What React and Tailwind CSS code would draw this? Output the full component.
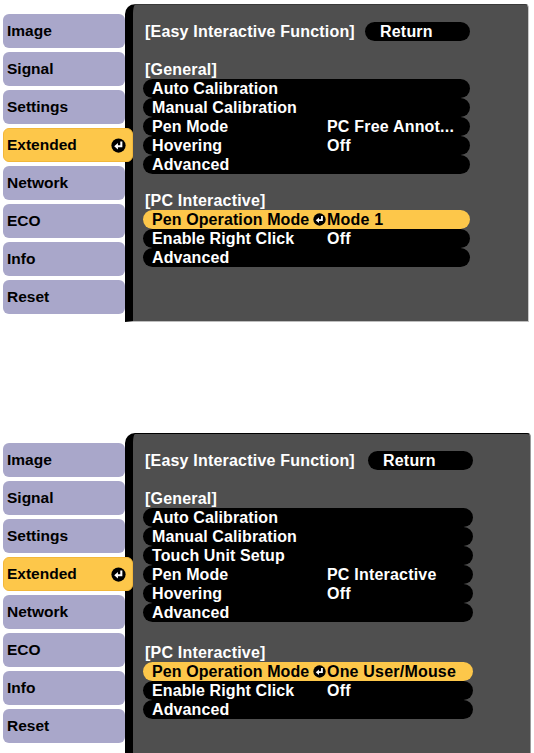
const menu = ['Image', 'Signal', 'Settings', 'Extended', 'Network', 'ECO', 'Info', 'Reset'];

// black dot with the white "enter" arrow used by the projector menu
const ReturnIcon = ({ className }) => (
  <svg viewBox="0 0 16 16" className={className}>
    <circle cx="8" cy="8" r="7.6" fill="#000" />
    <path d="M11 3.8v5H6.8" fill="none" stroke="#fff" strokeWidth="2.2" />
    <path d="M3.4 8.8 7.4 5.4v6.8z" fill="#fff" />
  </svg>
);

function Row({ label, value, active }) {
  return (
    <div
      className={`h-[19px] flex items-center rounded-full pl-[9px] ${
        active ? 'bg-[#fdc74a] text-black' : 'bg-black text-white'
      }`}
    >
      <div className="w-[175px] flex items-center justify-between pr-[1px]">
        <span className="tracking-[0.1px]">{label}</span>
        {active && <ReturnIcon className="w-[13px] h-[13px] shrink-0" />}
      </div>
      <span>{value}</span>
    </div>
  );
}

function Screen({ general, pcMode, rowWidth, gapBefore, panelHeight, panelBorder }) {
  return (
    <div className="flex" style={{ height: panelHeight }}>
      <div className="w-[125px] shrink-0 pt-[10px] pl-[3px] flex flex-col gap-[4px] relative z-10 text-[15.5px] font-bold">
        {menu.map((m) =>
          m === 'Extended' ? (
            <div
              key={m}
              className="h-[34px] w-[130px] rounded-[6px] bg-[#fdc74a] border border-[#f2b73a] flex items-center justify-between pl-[3px] pr-[6px] text-black"
            >
              <span>{m}</span>
              <ReturnIcon className="w-[15px] h-[15px]" />
            </div>
          ) : (
            <div
              key={m}
              className="h-[34px] w-[122px] rounded-[6px] bg-[#a9a7ca] flex items-center pl-[4px] text-black"
            >
              {m}
            </div>
          )
        )}
      </div>
      <div
        className={`flex-1 bg-[#4f4f4f] rounded-tl-[10px] rounded-tr-[4px] border-l-[8px] border-l-black ${panelBorder} pl-[10px] pt-[17px] text-white text-[16px] font-bold tracking-[0.2px]`}
      >
        <div className="flex items-center h-[19px]" style={{ width: rowWidth }}>
          <span className="pl-[2px]">[Easy Interactive Function]</span>
          <div className="ml-auto w-[105px] h-[19px] rounded-full bg-black pl-[15px] flex items-center">Return</div>
        </div>
        <div className="mt-[19px] h-[19px] flex items-center pl-[2px]">[General]</div>
        <div style={{ width: rowWidth }}>
          {general.map((r) => (
            <Row key={r[0]} label={r[0]} value={r[1]} />
          ))}
        </div>
        <div className="h-[19px] flex items-center pl-[2px]" style={{ marginTop: gapBefore }}>
          [PC Interactive]
        </div>
        <div style={{ width: rowWidth }}>
          <Row label="Pen Operation Mode" value={pcMode} active />
          <Row label="Enable Right Click" value="Off" />
          <Row label="Advanced" value="" />
        </div>
      </div>
    </div>
  );
}

export default function App() {
  return (
    <div
      className="w-[534px] h-[753px] bg-white overflow-hidden"
      style={{ fontFamily: '"Liberation Sans", Arial, sans-serif' }}
    >
      <div className="pt-[4px] pr-[5px]">
        <Screen
          general={[
            ['Auto Calibration', ''],
            ['Manual Calibration', ''],
            ['Pen Mode', 'PC Free Annot...'],
            ['Hovering', 'Off'],
            ['Advanced', ''],
          ]}
          pcMode="Mode 1"
          rowWidth={327}
          gapBefore={17}
          panelHeight={318}
          panelBorder="border-t border-r border-b border-t-[#3a3a3a] border-r-[#c9c9c9] border-b-[#bdbdbd]"
        />
      </div>
      <div className="mt-[111px] pr-[3px]">
        <Screen
          general={[
            ['Auto Calibration', ''],
            ['Manual Calibration', ''],
            ['Touch Unit Setup', ''],
            ['Pen Mode', 'PC Interactive'],
            ['Hovering', 'Off'],
            ['Advanced', ''],
          ]}
          pcMode="One User/Mouse"
          rowWidth={330}
          gapBefore={21}
          panelHeight={320}
          panelBorder="border-t border-r border-t-black border-r-[#9a9a9a]"
        />
      </div>
    </div>
  );
}
